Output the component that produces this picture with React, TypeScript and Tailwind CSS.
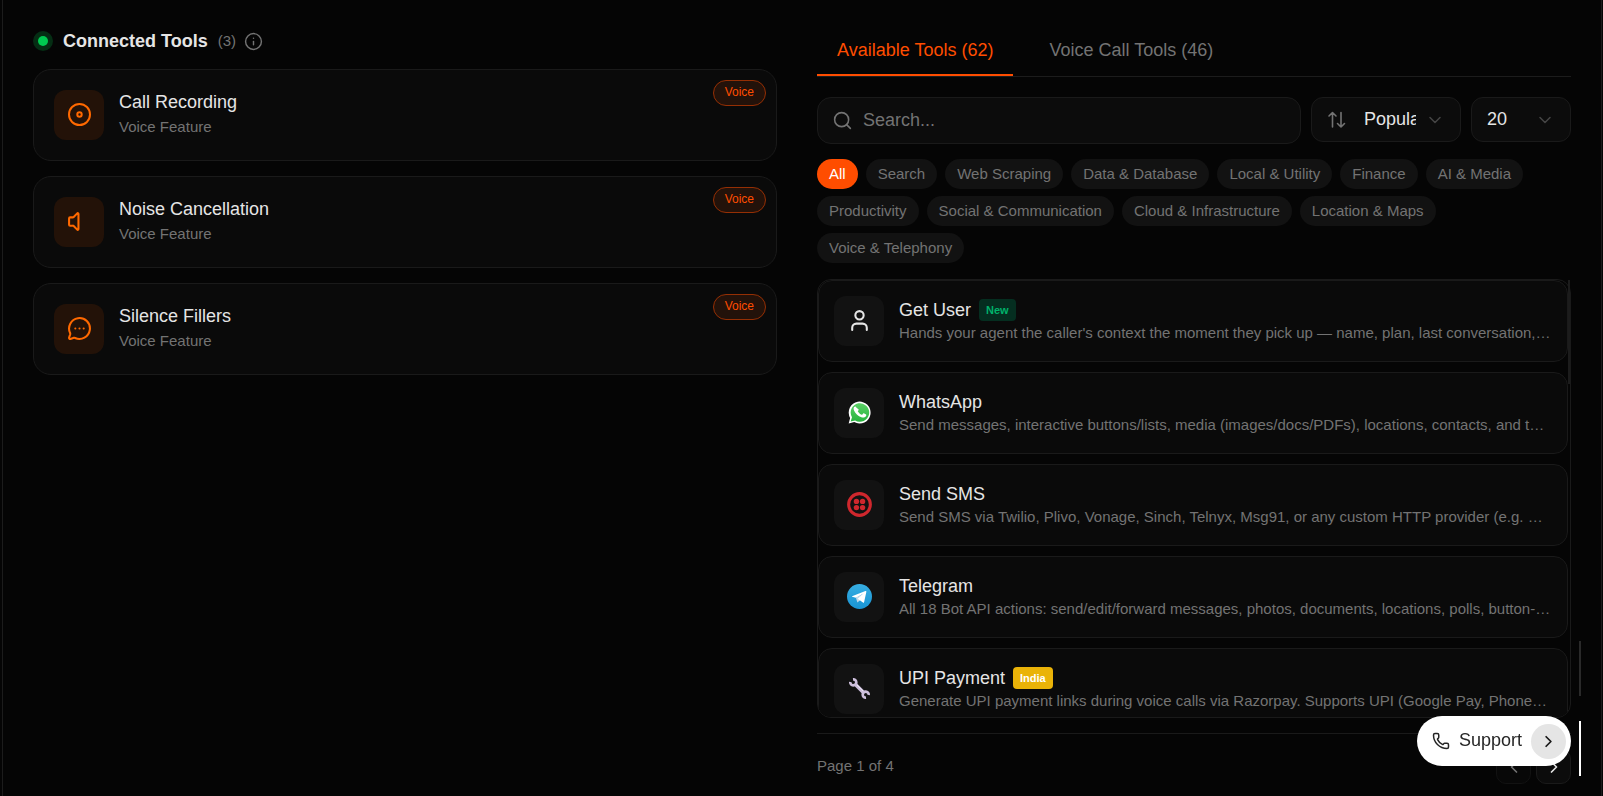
import { useState } from 'react'
import {
  ChevronDown,
  ChevronLeft,
  ChevronRight,
  Info,
  MessageCircleMore,
  Phone,
  Search,
  User,
  Volume,
} from 'lucide-react'

interface Tool {
  name: string
  description: string
  icon: React.ReactNode
  badge?: { label: string; className: string }
}

const categories = [
  'All',
  'Search',
  'Web Scraping',
  'Data & Database',
  'Local & Utility',
  'Finance',
  'AI & Media',
  'Productivity',
  'Social & Communication',
  'Cloud & Infrastructure',
  'Location & Maps',
  'Voice & Telephony',
]

function SortIcon() {
  return (
    <svg
      viewBox="0 0 20 20"
      className="h-5 w-5 shrink-0 text-[#737373]"
      fill="none"
      stroke="currentColor"
      strokeWidth="1.6"
      strokeLinecap="round"
      strokeLinejoin="round"
    >
      <path d="M5.500 17V2.500M2 6l3.500-3.500L9 6M14 2.500V17M10.500 13.500 14 17l3.500-3.500" />
    </svg>
  )
}

function RecordIcon() {
  return (
    <svg viewBox="0 0 25 25" className="h-[25px] w-[25px]" fill="none" stroke="currentColor" strokeWidth="2">
      <circle cx="12.500" cy="12.500" r="10.500" />
      <circle cx="12.500" cy="12.500" r="2.200" />
    </svg>
  )
}

function WhatsAppIcon() {
  return (
    <svg viewBox="0 0 24 24" className="h-[25px] w-[25px]">
      <defs>
        <linearGradient id="wa" x1="0" y1="0" x2="0" y2="1">
          <stop offset="0" stopColor="#5bd066" />
          <stop offset="1" stopColor="#27b43e" />
        </linearGradient>
      </defs>
      <path d="M1.600 22.600 3 17.200A10.500 10.500 0 1 1 7 21.200z" fill="#fff" />
      <path d="M3.500 20.700 4.800 16.600A8.900 8.900 0 1 1 7.800 19.600z" fill="url(#wa)" />
      <path
        fill="#fff"
        d="M9.300 7.300c-.3-.6-.5-.6-.8-.6-.7 0-1.800.8-1.800 2.400 0 1.600 1.200 3.200 1.400 3.400.1.200 2.300 3.700 5.700 5 2.800 1.100 3.400.9 4 .8.600-.1 1.900-.8 2.200-1.500.3-.8.300-1.400.2-1.500-.1-.2-.3-.2-.6-.4l-2-1c-.3-.1-.5-.1-.7.2l-1 1.200c-.2.200-.3.200-.6.100-1.700-.8-2.900-1.700-4-3.500-.3-.5.300-.5.800-1.500.1-.2 0-.4 0-.5z"
        transform="translate(.3 .3) scale(.9)"
      />
    </svg>
  )
}

function TwilioIcon() {
  return (
    <svg viewBox="0 0 26 26" className="h-[25px] w-[25px]" fill="#cf272d">
      <circle cx="13" cy="13" r="11.300" fill="none" stroke="#cf272d" strokeWidth="3.200" />
      <circle cx="9.800" cy="9.800" r="2.800" />
      <circle cx="16.200" cy="9.800" r="2.800" />
      <circle cx="9.800" cy="16.200" r="2.800" />
      <circle cx="16.200" cy="16.200" r="2.800" />
    </svg>
  )
}

function TelegramIcon() {
  return (
    <svg viewBox="0 0 24 24" className="h-[25px] w-[25px]">
      <defs>
        <linearGradient id="tg" x1="0" y1="0" x2="0" y2="1">
          <stop offset="0" stopColor="#37aee2" />
          <stop offset="1" stopColor="#1994d4" />
        </linearGradient>
      </defs>
      <circle cx="12" cy="12" r="12" fill="url(#tg)" />
      <path d="M8.600 13.300 10 17.700 12.400 15.600 16 9z" fill="#c8daea" />
      <path d="M4.800 11.800 17.700 6.700c.6-.2 1 .1.900.8l-2.200 9.900c-.1.600-.6.800-1.100.4L10.300 14.200 15.800 9.200 8.600 13.300 4.900 12.300z" fill="#fff" />
    </svg>
  )
}

function WrenchIcon() {
  return (
    <svg viewBox="0 0 25 25" className="h-[25px] w-[25px]" fill="none" stroke="#cdbfdc">
      <path d="M8.500 8.500 16.500 16.500" strokeWidth="3.800" />
      <path d="M9.300 8.300 17 16" stroke="#ece6f3" strokeWidth="1" />
      <path d="M6 3.300A3 3 0 1 1 3.300 6" strokeWidth="2.700" />
      <path d="M19 21.700A3 3 0 1 1 21.700 19" strokeWidth="2.700" />
    </svg>
  )
}

const connectedTools = [
  { name: 'Call Recording', icon: <RecordIcon /> },
  { name: 'Noise Cancellation', icon: <Volume size={25} /> },
  { name: 'Silence Fillers', icon: <MessageCircleMore size={25} /> },
]

const tools: Tool[] = [
  {
    name: 'Get User',
    description:
      "Hands your agent the caller's context the moment they pick up — name, plan, last conversation, open tickets and more",
    icon: <User size={25} className="text-[#e5e5e5]" />,
    badge: { label: 'New', className: 'bg-[#052e20] text-[#00b36b]' },
  },
  {
    name: 'WhatsApp',
    description:
      'Send messages, interactive buttons/lists, media (images/docs/PDFs), locations, contacts, and templates via WhatsApp',
    icon: <WhatsAppIcon />,
  },
  {
    name: 'Send SMS',
    description:
      'Send SMS via Twilio, Plivo, Vonage, Sinch, Telnyx, Msg91, or any custom HTTP provider (e.g. MessageBird)',
    icon: <TwilioIcon />,
  },
  {
    name: 'Telegram',
    description:
      'All 18 Bot API actions: send/edit/forward messages, photos, documents, locations, polls, button-driven menus',
    icon: <TelegramIcon />,
  },
  {
    name: 'UPI Payment',
    description:
      'Generate UPI payment links during voice calls via Razorpay. Supports UPI (Google Pay, PhonePe, Paytm) and cards',
    icon: <WrenchIcon />,
    badge: { label: 'India', className: 'bg-[#eab308] text-white' },
  },
]

function ConnectedTools() {
  return (
    <section>
      <div className="mb-[18px] flex h-5 items-center gap-[10px]">
        <span className="flex h-5 w-5 items-center justify-center rounded-full bg-[#052e14]">
          <span className="h-[10px] w-[10px] rounded-full bg-[#00c950]" />
        </span>
        <h2 className="text-[18px] font-bold">Connected Tools</h2>
        <div className="flex items-center gap-2">
          <span className="text-[15px] text-[#737373]">(3)</span>
          <button aria-label="About connected tools" className="text-[#737373]">
            <Info size={19} strokeWidth={1.8} />
          </button>
        </div>
      </div>
      <ul className="space-y-[15px]">
        {connectedTools.map((tool) => (
          <li
            key={tool.name}
            className="relative flex gap-[15px] rounded-[18px] border border-[#1a1a1a] bg-[#0a0a0a] p-5"
          >
            <span className="flex h-[50px] w-[50px] shrink-0 justify-center rounded-xl bg-[#231208] pt-3 text-[#ff6900]">
              {tool.icon}
            </span>
            <div>
              <h3 className="text-[18px] leading-[25px]">{tool.name}</h3>
              <p className="text-[15px] leading-[23px] text-[#737373]">Voice Feature</p>
            </div>
            <span className="absolute top-[10px] right-[10px] h-[26px] rounded-full border border-[#952f04] bg-[#23120a] px-[11px] text-[12px] leading-[22px] text-[#ff4d00]">
              Voice
            </span>
          </li>
        ))}
      </ul>
    </section>
  )
}

function ToolCard({ tool }: { tool: Tool }) {
  return (
    <li className="flex items-center gap-[15px] rounded-[14px] border border-[#1a1a1a] bg-[#0a0a0a] p-[15px]">
      <span className="flex h-[50px] w-[50px] shrink-0 justify-center rounded-xl bg-[#121212] pt-3">
        {tool.icon}
      </span>
      <div className="min-w-0 flex-1 pt-[2px]">
        <div className="flex items-center gap-2">
          <h3 className="text-[18px] leading-[22px]">{tool.name}</h3>
          {tool.badge && (
            <span
              className={`h-[22px] rounded px-[7px] text-[11px] leading-[22px] font-bold ${tool.badge.className}`}
            >
              {tool.badge.label}
            </span>
          )}
        </div>
        <p className="truncate text-[15px] leading-6 text-[#737373]">{tool.description}</p>
      </div>
    </li>
  )
}

export default function App() {
  const [tab, setTab] = useState('available')
  const [category, setCategory] = useState('All')
  const [query, setQuery] = useState('')

  const tabClass = (active: boolean) =>
    active
      ? 'h-[45px] border-b-2 border-[#ff4d00] px-5 pb-1 text-[18px] text-[#ff4d00]'
      : 'h-[45px] border-b-2 border-transparent px-5 pb-1 text-[18px] text-[#737373]'

  return (
    <div className="min-h-screen bg-[#050505] pl-[2px] pr-px font-['Liberation_Sans',Arial,sans-serif] text-[#e5e5e5]">
      <main className="grid min-h-screen grid-cols-[744fr_754fr] gap-10 border-x border-[#1c1c1c] px-[30px] pt-[31px] pb-3">
        <ConnectedTools />

        <section className="min-w-0">
          <div role="tablist" className="flex gap-4 border-b border-[#1c1c1c]">
            <button
              role="tab"
              aria-selected={tab === 'available'}
              onClick={() => setTab('available')}
              className={tabClass(tab === 'available')}
            >
              Available Tools (62)
            </button>
            <button
              role="tab"
              aria-selected={tab === 'voice'}
              onClick={() => setTab('voice')}
              className={tabClass(tab === 'voice')}
            >
              Voice Call Tools (46)
            </button>
          </div>

          {/* Search and sorting */}
          <div className="mt-5 flex items-start gap-[10px]">
            <label className="flex h-[47px] flex-1 items-center gap-[10px] rounded-[14px] border border-[#1a1a1a] bg-[#0c0c0c] px-[14px]">
              <Search size={21} strokeWidth={1.8} className="shrink-0 text-[#737373]" />
              <input
                type="text"
                aria-label="Search tools"
                placeholder="Search..."
                value={query}
                onChange={(e) => setQuery(e.target.value)}
                className="w-full bg-transparent pb-px text-[18px] outline-none placeholder:text-[#737373]"
              />
            </label>
            <label className="flex h-[45px] w-[150px] items-center rounded-xl border border-[#1a1a1a] bg-[#0c0c0c] px-[15px]">
              <SortIcon />
              <select
                aria-label="Sort by"
                className="ml-[17px] w-[52px] appearance-none bg-transparent text-[18px] outline-none"
              >
                <option>Popular</option>
                <option>Newest</option>
                <option>Name</option>
              </select>
              <ChevronDown size={20} strokeWidth={1.8} className="ml-auto shrink-0 text-[#454545]" />
            </label>
            <label className="flex h-[45px] w-[100px] items-center rounded-xl border border-[#1a1a1a] bg-[#0c0c0c] px-[15px]">
              <select
                aria-label="Tools per page"
                className="min-w-0 flex-1 appearance-none bg-transparent text-[18px] outline-none"
              >
                <option>20</option>
                <option>50</option>
              </select>
              <ChevronDown size={20} strokeWidth={1.8} className="shrink-0 text-[#454545]" />
            </label>
          </div>

          <div className="mt-[15px] flex flex-wrap gap-x-2 gap-y-[7px]">
            {categories.map((name) => (
              <button
                key={name}
                onClick={() => setCategory(name)}
                className={
                  name === category
                    ? 'h-[30px] rounded-full bg-[#ff4d00] px-3 text-[15px] text-white'
                    : 'h-[30px] rounded-full bg-[#121212] px-3 text-[15px] text-[#737373]'
                }
              >
                {name}
              </button>
            ))}
          </div>

          <div className="relative mt-4">
            <div className="h-[439px] overflow-hidden rounded-[14px] border border-[#1a1a1a]">
              <ul className="mr-[2px] space-y-[10px]">
                {tools.map((tool) => (
                  <ToolCard key={tool.name} tool={tool} />
                ))}
              </ul>
            </div>
            <span className="absolute top-px right-px h-[104px] w-[2px] bg-[#1c1c1c]" />
          </div>

          <div className="mt-[15px] flex items-center justify-between border-t border-[#1a1a1a] pt-[15px]">
            <span className="text-[15px] text-[#737373]">Page 1 of 4</span>
            <div className="flex gap-[5px]">
              <button
                aria-label="Previous page"
                disabled
                className="flex h-[35px] w-[35px] items-center justify-center rounded-[10px] border border-[#121212] bg-[#080808] text-[#737373]"
              >
                <ChevronLeft size={20} />
              </button>
              <button
                aria-label="Next page"
                className="flex h-[35px] w-[35px] items-center justify-center rounded-[10px] border border-[#1a1a1a] bg-[#0c0c0c]"
              >
                <ChevronRight size={20} />
              </button>
            </div>
          </div>
        </section>
      </main>

      <button className="fixed right-8 bottom-[30px] flex h-[50px] items-center rounded-full bg-white pr-[5px] pl-[15px] text-[18px] text-[#262626]">
        <Phone size={18} strokeWidth={2} />
        <span className="mr-[9px] ml-[9px] pb-[2px]">Support</span>
        <span className="flex h-[35px] w-[35px] items-center justify-center rounded-full bg-[#e5e5e5] text-[#171717]">
          <ChevronRight size={19} strokeWidth={2.2} />
        </span>
      </button>

      {/* Page section markers */}
      <div className="fixed right-[22px] bottom-5 flex flex-col gap-[25px]">
        <span className="h-[55px] w-[2px] bg-[#2a2a2a]" />
        <span className="h-[55px] w-[2px] bg-white" />
      </div>
    </div>
  )
}
